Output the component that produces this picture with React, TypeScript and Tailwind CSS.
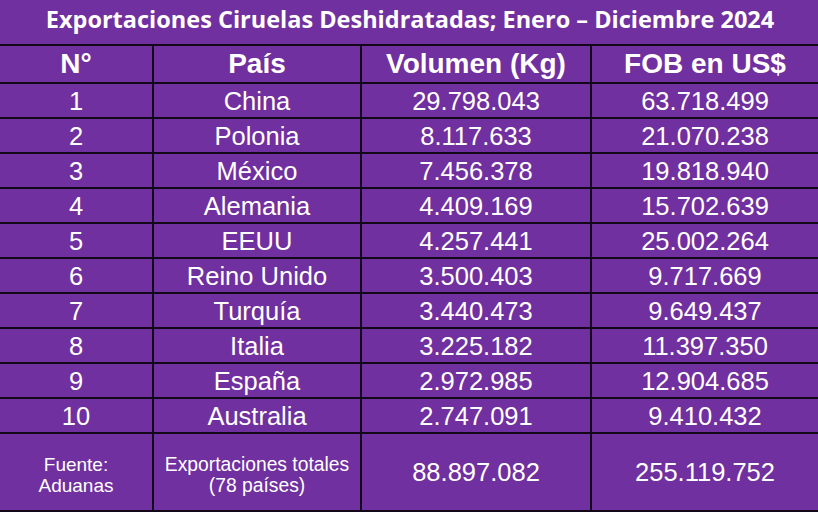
import React from 'react';

interface Row {
  n: number;
  pais: string;
  volumen: string;
  fob: string;
}

const rows: Row[] = [
  { n: 1, pais: 'China', volumen: '29.798.043', fob: '63.718.499' },
  { n: 2, pais: 'Polonia', volumen: '8.117.633', fob: '21.070.238' },
  { n: 3, pais: 'México', volumen: '7.456.378', fob: '19.818.940' },
  { n: 4, pais: 'Alemania', volumen: '4.409.169', fob: '15.702.639' },
  { n: 5, pais: 'EEUU', volumen: '4.257.441', fob: '25.002.264' },
  { n: 6, pais: 'Reino Unido', volumen: '3.500.403', fob: '9.717.669' },
  { n: 7, pais: 'Turquía', volumen: '3.440.473', fob: '9.649.437' },
  { n: 8, pais: 'Italia', volumen: '3.225.182', fob: '11.397.350' },
  { n: 9, pais: 'España', volumen: '2.972.985', fob: '12.904.685' },
  { n: 10, pais: 'Australia', volumen: '2.747.091', fob: '9.410.432' },
];

const cell = 'flex items-center justify-center border-b-2 border-r-2 border-[#12081a] text-center';
const last = 'flex items-center justify-center border-b-2 border-[#12081a] text-center';

export default function App() {
  return (
    <div className="w-[818px] h-[512px] bg-[#7030a0] text-white font-['Liberation_Sans',Arial,sans-serif] overflow-hidden">
      <div className="h-[46px] flex items-center justify-center border-b-2 border-[#12081a] font-['Open_Sans',sans-serif] font-bold text-[23.5px] pb-[5px] pl-[2px]">
        Exportaciones Ciruelas Deshidratadas; Enero – Diciembre 2024
      </div>

      <div className="grid grid-cols-[154px_208px_230px_226px] grid-rows-[38px_repeat(10,35px)_78px]">
        <div className={`${cell} font-bold text-[28px]`}>N°</div>
        <div className={`${cell} font-bold text-[28px]`}>País</div>
        <div className={`${cell} font-bold text-[28px]`}>Volumen (Kg)</div>
        <div className={`${last} font-bold text-[28px]`}>FOB en US$</div>

        {rows.map((r) => (
          <React.Fragment key={r.n}>
            <div className={`${cell} text-[25.5px] pt-[2px]`}>{r.n}</div>
            <div className={`${cell} text-[25.5px] pt-[2px]`}>{r.pais}</div>
            <div className={`${cell} text-[25.5px] pt-[2px]`}>{r.volumen}</div>
            <div className={`${last} text-[25.5px] pt-[2px]`}>{r.fob}</div>
          </React.Fragment>
        ))}

        <div className={`${cell} flex-col text-[19px] leading-[21px] pt-[6px]`}>
          <span>Fuente:</span>
          <span>Aduanas</span>
        </div>
        <div className={`${cell} flex-col text-[19.3px] leading-[21px] pt-[6px]`}>
          <span>Exportaciones totales</span>
          <span>(78 países)</span>
        </div>
        <div className={`${cell} text-[25.5px]`}>88.897.082</div>
        <div className={`${last} text-[25.5px]`}>255.119.752</div>
      </div>
    </div>
  );
}
